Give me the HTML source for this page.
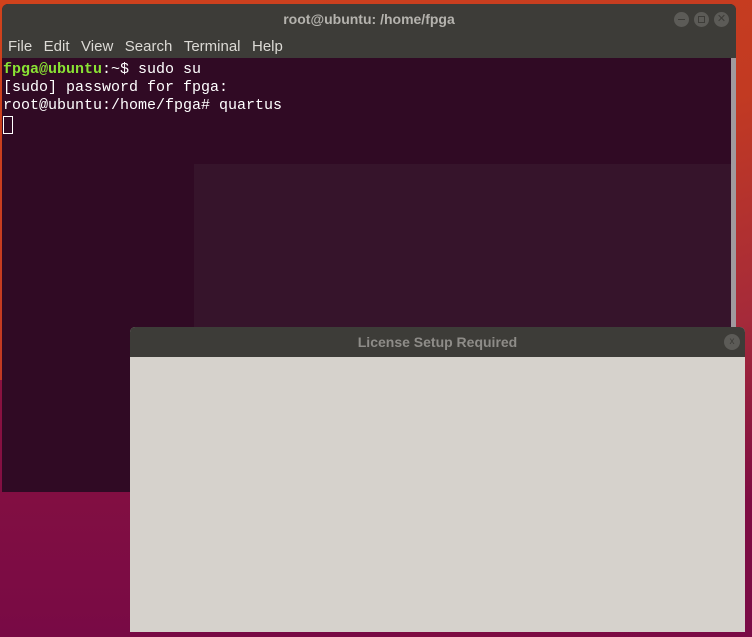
<!DOCTYPE html>
<html><head><style>
body{margin:0;width:752px;height:637px;overflow:hidden;position:relative;
background:linear-gradient(160deg,#d0421c 0%,#c23a22 40%,#a52a3a 65%,#7e0c42 85%,#7a0b46 100%);
font-family:"Liberation Sans",sans-serif;}
.bgl{position:absolute;left:0;top:380px;width:400px;height:257px;background:linear-gradient(180deg,#8a1240,#780a45);}
.term{position:absolute;left:2px;top:4px;width:734px;height:488px;background:#300a24;border-radius:6px 6px 0 0;overflow:hidden;}
.tb{height:30px;background:#3d3c38;color:#b5b3ae;font-size:14px;font-weight:bold;text-align:center;line-height:30px;}
.menu{height:24px;background:#3d3c38;color:#dcdad5;font-size:15px;line-height:26px;padding-left:6px;}
.menu span{margin-right:11.5px}
.content{position:absolute;top:57px;left:0;right:5px;bottom:0;font-family:"Liberation Mono",monospace;font-size:15px;color:#fff;line-height:18px;padding-left:1px;white-space:pre;}
.g{color:#8ae234;font-weight:bold}
.sb{position:absolute;right:0;top:54px;width:5px;bottom:0;background:#a09a9e;}
.inner{position:absolute;left:192px;top:160px;width:537px;height:330px;background:#36142b;}
.btn{position:absolute;top:8px;width:15px;height:15px;border-radius:50%;background:#5c5b57;}
.dlg{position:absolute;left:130px;top:327px;width:615px;height:305px;background:#d6d2cc;border-radius:5px 5px 0 0;overflow:hidden;}
.dtb{height:30px;background:#3d3c38;color:#8e8c88;font-size:14px;font-weight:bold;text-align:center;line-height:30px;}
</style></head><body>
<div class="bgl"></div>
<div class="term">
<div class="tb">root@ubuntu: /home/fpga</div>
<div class="btn" style="left:672px"><div style="position:absolute;left:4px;top:7px;width:7px;height:1px;background:#3d3c38"></div></div>
<div class="btn" style="left:692px"><div style="position:absolute;left:4px;top:4px;width:5px;height:5px;border:1px solid #3d3c38"></div></div>
<div class="btn" style="left:712px;color:#3d3c38;font-size:11px;line-height:15px;text-align:center">✕</div>
<div class="menu"><span>File</span><span>Edit</span><span>View</span><span>Search</span><span>Terminal</span><span>Help</span></div>
<div class="inner"></div>
<div class="content"><span class="g">fpga@ubuntu</span>:~$ sudo su
[sudo] password for fpga:
root@ubuntu:/home/fpga# quartus
<span style="display:inline-block;width:10px;height:18px;border:1px solid #fff;box-sizing:border-box;vertical-align:top;margin-top:1px"></span></div>
<div class="sb"></div>
</div>
<div class="dlg">
<div class="dtb">License Setup Required</div>
<div style="position:absolute;left:594px;top:7px;width:16px;height:16px;border-radius:50%;background:#5c5b57;color:#3d3c38;font-size:10px;line-height:16px;text-align:center">x</div>
</div>
</body></html>
